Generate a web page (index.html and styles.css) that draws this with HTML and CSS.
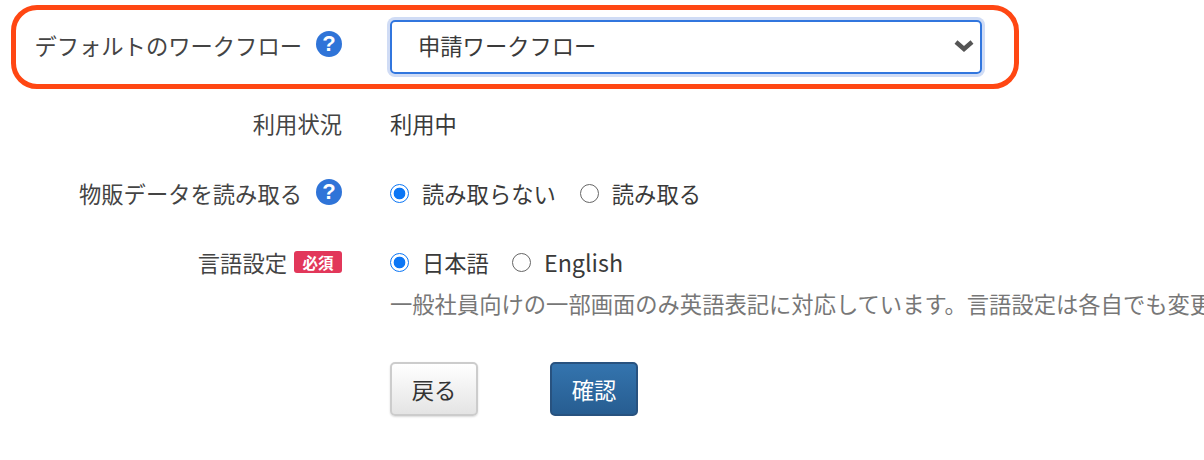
FILE: index.html
```html
<!DOCTYPE html>
<html lang="ja">
<head>
  <meta charset="UTF-8">
  <title>ワークフロー設定</title>
  <link rel="stylesheet" href="styles.css">
</head>
<body>
  <form class="settings">
    <div class="form-row row-workflow">
      <div class="label-cell">
        <span>デフォルトのワークフロー</span>
        <span class="help-icon">?</span>
      </div>
      <div class="select-box">
        <span class="select-text">申請ワークフロー</span>
        <svg class="chevron" width="20" height="13" viewBox="0 0 20 13">
          <path d="M2 3 L10 10 L18 3" fill="none" stroke="#555" stroke-width="4.4"/>
        </svg>
      </div>
    </div>

    <div class="form-row row-status">
      <div class="label-cell"><span>利用状況</span></div>
      <div>利用中</div>
    </div>

    <div class="form-row row-goods">
      <div class="label-cell">
        <span>物販データを読み取る</span>
        <span class="help-icon">?</span>
      </div>
      <div class="radio-group">
        <label class="radio-item"><input type="radio" name="goods" checked>読み取らない</label>
        <label class="radio-item"><input type="radio" name="goods">読み取る</label>
      </div>
    </div>

    <div class="form-row row-lang">
      <div class="label-cell">
        <span>言語設定</span>
        <span class="badge">必須</span>
      </div>
      <div class="radio-group">
        <label class="radio-item"><input type="radio" name="lang" checked>日本語</label>
        <label class="radio-item lang-en"><input type="radio" name="lang">English</label>
      </div>
    </div>
    <div class="form-row row-note">
      <div></div>
      <div class="note">一般社員向けの一部画面のみ英語表記に対応しています。言語設定は各自でも変更</div>
    </div>

    <div class="form-row row-buttons">
      <div></div>
      <div class="buttons">
        <button type="button" class="btn btn-back">戻る</button>
        <button type="button" class="btn btn-confirm">確認</button>
      </div>
    </div>
  </form>

  <div class="highlight"></div>
</body>
</html>
```

FILE: styles.css
```css
html, body {
  height: 100%;
}

body {
  margin: 0;
  position: relative;
  overflow: hidden;
  background-color: #fff;
  color: #3a3a3a;
  font-family: "Noto Sans CJK JP", "Noto Sans", sans-serif;
  font-size: 22.3px;
  line-height: 32px;
}

.settings {
  padding-top: 20px;
}

.form-row {
  display: grid;
  grid-template-columns: 342px 1fr;
  column-gap: 48px;
  align-items: center;
  white-space: nowrap;
}

.row-status {
  margin-top: 33px;
}

.row-goods {
  margin-top: 38px;
}

.row-lang {
  margin-top: 37px;
}

.row-note {
  margin-top: 9px;
}

.row-buttons {
  margin-top: 43px;
}

.label-cell {
  display: flex;
  align-items: center;
  justify-content: flex-end;
  gap: 14px;
  color: #444;
}

.row-workflow .label-cell {
  padding-bottom: 4px;
}

.row-workflow .help-icon {
  margin-top: -2px;
}

.select-text {
  padding-bottom: 4px;
}

.row-lang .label-cell {
  gap: 7px;
}

.help-icon {
  width: 26px;
  height: 26px;
  border-radius: 50%;
  background-color: #2f74d8;
  color: #fff;
  font-family: "Liberation Sans", sans-serif;
  font-size: 22px;
  font-weight: bold;
  line-height: 26px;
  text-align: center;
  margin-top: -3px;
}

.badge {
  width: 48px;
  height: 22px;
  border-radius: 3px;
  background-color: #e2375a;
  color: #fff;
  font-size: 15.5px;
  font-weight: bold;
  line-height: 22px;
  text-align: center;
}

.select-box {
  display: flex;
  align-items: center;
  justify-content: space-between;
  box-sizing: border-box;
  width: 592px;
  height: 54px;
  padding: 0 6px 0 26px;
  border: 2px solid #3176de;
  border-radius: 5px;
  box-shadow: 0 0 0 3px #d0dcf5;
}

.chevron {
  display: block;
  margin-bottom: 3px;
}

.radio-group {
  display: flex;
  gap: 24px;
}

.row-lang .radio-group {
  gap: 23px;
}

.radio-item {
  display: flex;
  align-items: center;
}

.lang-en {
  font-size: 23.3px;
}

.radio-item input {
  appearance: none;
  box-sizing: border-box;
  width: 19px;
  height: 19px;
  margin: 0 13px 0 0;
  border: 1.5px solid #666;
  border-radius: 50%;
  background-color: #fff;
}

.radio-item input:checked {
  border-color: #0b76f5;
  background: radial-gradient(circle, #0b76f5 0 5.5px, #fff 6.2px);
}

.note {
  color: #777;
}

.buttons {
  display: flex;
  gap: 72px;
}

.btn {
  box-sizing: border-box;
  width: 88px;
  height: 54px;
  border-radius: 5px;
  font-family: inherit;
  font-size: 22.3px;
  padding: 0;
}

.btn-back {
  border: 2px solid #ccc;
  background: linear-gradient(#fff, #e4e4e4);
  color: #333;
  box-shadow: 0 1px 2px rgba(0,0,0,0.15);
}

.btn-confirm {
  border: 2px solid #28527f;
  background: linear-gradient(#3474ae, #275d91);
  color: #fff;
}

/* annotation drawn over the first row */
.highlight {
  position: absolute;
  left: 11px;
  top: 5px;
  width: 1008px;
  height: 84px;
  box-sizing: border-box;
  border: 5px solid #ff4713;
  border-radius: 26px;
  pointer-events: none;
}
```
